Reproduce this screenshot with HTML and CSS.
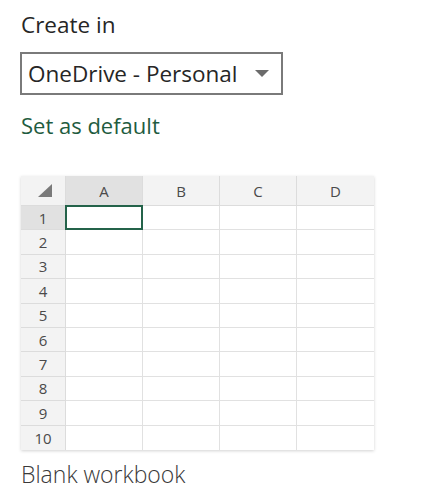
FILE: index.html
```html
<!DOCTYPE html>
<html>
<head>
<meta charset="utf-8">
<link rel="stylesheet" href="styles.css">
</head>
<body>
<div class="page">
  <div class="title">Create in</div>
  <div class="select">
    <span class="select-text">OneDrive - Personal</span>
    <svg class="caret" width="14" height="8" viewBox="0 0 14 8"><path d="M0 0 L14 0 L7 7 Z" fill="#6b6b6b"/></svg>
  </div>
  <div class="link">Set as default</div>
  <div class="sheet">
    <div class="corner"><svg width="14" height="13" viewBox="0 0 14 13"><path d="M14 0 L14 13 L0 13 Z" fill="#7a7a7a"/></svg></div>
    <div class="colhead sel">A</div>
    <div class="colhead">B</div>
    <div class="colhead">C</div>
    <div class="colhead last">D</div>

    <div class="rowhead sel">1</div><div class="cell active"></div><div class="cell"></div><div class="cell"></div><div class="cell last"></div>
    <div class="rowhead">2</div><div class="cell"></div><div class="cell"></div><div class="cell"></div><div class="cell last"></div>
    <div class="rowhead">3</div><div class="cell"></div><div class="cell"></div><div class="cell"></div><div class="cell last"></div>
    <div class="rowhead">4</div><div class="cell"></div><div class="cell"></div><div class="cell"></div><div class="cell last"></div>
    <div class="rowhead">5</div><div class="cell"></div><div class="cell"></div><div class="cell"></div><div class="cell last"></div>
    <div class="rowhead">6</div><div class="cell"></div><div class="cell"></div><div class="cell"></div><div class="cell last"></div>
    <div class="rowhead">7</div><div class="cell"></div><div class="cell"></div><div class="cell"></div><div class="cell last"></div>
    <div class="rowhead">8</div><div class="cell"></div><div class="cell"></div><div class="cell"></div><div class="cell last"></div>
    <div class="rowhead">9</div><div class="cell"></div><div class="cell"></div><div class="cell"></div><div class="cell last"></div>
    <div class="rowhead bottom">10</div><div class="cell bottom"></div><div class="cell bottom"></div><div class="cell bottom"></div><div class="cell last bottom"></div>
  </div>
  <div class="caption">Blank workbook</div>
</div>
</body>
</html>
```

FILE: styles.css
```css
html, body {
  margin: 0;
  padding: 0;
  background: #ffffff;
}
.page {
  padding: 9px 0 0 21px;
  font-family: "Open Sans", "Noto Sans", sans-serif;
  font-weight: 400;
  color: #262626;
}
.title {
  font-size: 22.5px;
  line-height: 31px;
  height: 31px;
}
.select {
  margin: 12px 0 0 -1px;
  border: 2px solid #7a7a7a;
  display: flex;
  align-items: center;
  justify-content: space-between;
  padding: 0 12px 0 6px;
  box-sizing: border-box;
  width: 263px;
  height: 43px;
}
.select-text {
  font-size: 22.5px;
  color: #262626;
}
.caret {
  display: block;
}
.link {
  margin-top: 15px;
  font-size: 22px;
  line-height: 30px;
  color: #1f5c3f;
}
.sheet {
  margin-top: 36px;
  width: 353px;
  display: grid;
  grid-template-columns: 45px 77px 77px 77px 77px;
  grid-template-rows: 30px repeat(10, 24.4px);
  box-shadow: 0 1px 3px rgba(0,0,0,0.18);
  background: #fff;
  font-size: 15px;
  color: #4a4a4a;
}
.corner {
  background: #f3f3f3;
  border-right: 1px solid #dcdcdc;
  border-bottom: 1px solid #dcdcdc;
  display: flex;
  align-items: flex-end;
  justify-content: flex-end;
  padding: 0 13px 8px 0;
}
.colhead {
  background: #f3f3f3;
  border-right: 1px solid #dcdcdc;
  border-bottom: 1px solid #dcdcdc;
  display: flex;
  align-items: center;
  justify-content: center;
}
.colhead.sel {
  background: #e1e1e1;
}
.rowhead {
  background: #f3f3f3;
  border-right: 1px solid #dcdcdc;
  border-bottom: 1px solid #dcdcdc;
  display: flex;
  align-items: center;
  justify-content: center;
}
.rowhead.sel {
  background: #e1e1e1;
}
.cell {
  border-right: 1px solid #e1e1e1;
  border-bottom: 1px solid #e1e1e1;
}
.cell.active {
  border: 2px solid #24634a;
  margin: -1px 0 0 -1px;
}
.last {
  border-right: none;
}
.bottom {
  border-bottom: none;
}
.caption {
  margin-top: 9px;
  font-size: 23px;
  font-weight: 300;
  line-height: 30px;
  color: #3a3a3a;
}
```
